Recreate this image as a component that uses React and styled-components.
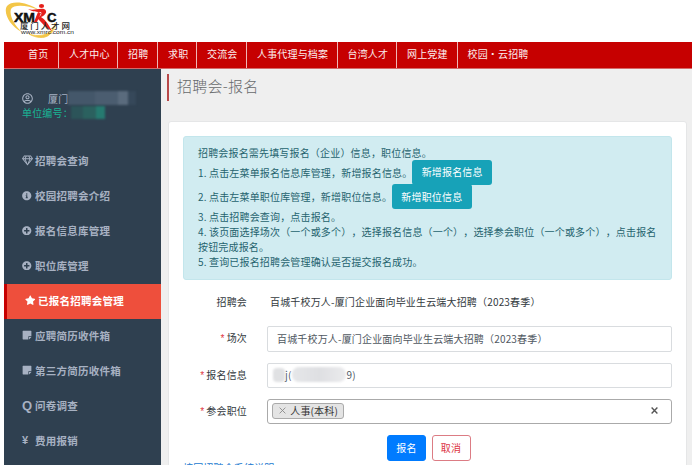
import React from 'react';
import styled, { createGlobalStyle, css } from 'styled-components';
import { FaRegGem, FaRegUserCircle, FaInfoCircle, FaPlusCircle, FaStar, FaStickyNote } from 'react-icons/fa';

const Global = createGlobalStyle`
  * { box-sizing: border-box; }
  html, body { margin: 0; height: 465px; overflow: hidden; background: #fff; }
  body {
    font-family: "Noto Sans CJK SC", sans-serif;
    font-size: 10px;
    letter-spacing: 0.17px;
    color: #333a40;
    text-spacing-trim: space-all;
    font-feature-settings: "chws" 0, "halt" 0;
  }
`;

const Page = styled.div`
  width: 693px;
  height: 465px;
  display: flex;
  flex-direction: column;
  overflow: hidden;
`;
const Header = styled.header`
  height: 42px;
  flex: none;
  padding-left: 4px;
`;
const Nav = styled.nav`
  display: flex;
  flex: none;
  height: 26.5px;
  margin: 0 1px 0 4px;
  padding-left: 14px;
  background: #c60000;
  border-bottom: 1px solid #d46a6a;
`;
const NavItem = styled.a`
  width: ${(p) => p.$w}px;
  padding-left: 10px;
  line-height: 24px;
  color: #fbeeee;
  white-space: nowrap;
  border-right: ${(p) => (p.$last ? 0 : 1)}px solid #efb5b5;
`;
const Body = styled.div`
  display: flex;
  flex: 1;
  min-height: 0;
  padding: 0 1px 0 4px;
`;
const Sidebar = styled.aside`
  width: 157px;
  flex: none;
  background: #2f4050;
  color: #a7b1c2;
`;
const Profile = styled.div`
  height: 76px;
  padding: 22.5px 0 0 18px;
`;
const ProfileRow = styled.div`
  display: flex;
  align-items: center;
  height: 14.5px;
  white-space: nowrap;
  color: ${(p) => (p.$accent ? '#1ab394' : '#a7b1c2')};
  svg { width: 11px; height: 11px; margin-right: 15px; }
`;
const Mosaic = styled.span`
  display: block;
  flex: none;
  width: ${(p) => p.$w}px;
  height: ${(p) => p.$h}px;
  margin-left: ${(p) => p.$ml || 0}px;
  border-radius: ${(p) => p.$r || 0}px;
  background: ${(p) => p.$bg};
  filter: blur(0.8px);
`;
const MenuItem = styled.a`
  display: flex;
  align-items: center;
  height: 34.9px;
  padding: 0 0 2px 18px;
  font-size: 10.5px;
  font-weight: 600;
  letter-spacing: 0.25px;
  white-space: nowrap;
  ${(p) => p.$active && css`
    border-left: 3px solid #c60000;
    background: #ee4f3c;
    color: #fff;
  `}
`;
const MenuIcon = styled.span`
  width: 13px;
  flex: none;
  display: flex;
  font-size: ${(p) => p.$fs || 12}px;
  font-family: "Liberation Sans", sans-serif;
  svg { width: ${(p) => p.$s || 9.5}px; height: ${(p) => p.$s || 9.5}px; }
`;
const Main = styled.main`
  flex: 1;
  min-width: 0;
  background: #efefef;
  padding: 5px 5px 0 6px;
`;
const Title = styled.h1`
  margin: 0 0 20px;
  height: 27.5px;
  padding-left: 8px;
  border-left: 2px solid #b84848;
  font-size: 15px;
  font-weight: 300;
  letter-spacing: 0.25px;
  line-height: 24px;
  color: #676a6c;
`;
const Card = styled.section`
  height: 360px;
  margin-left: 1px;
  padding: 14px 14px 0;
  background: #fff;
  border: 1px solid #e5e6e7;
  border-radius: 3px 3px 0 0;
`;
const Alert = styled.div`
  height: 143.5px;
  padding: 8px 14px 0;
  background: #d1ecf1;
  border: 1px solid #c3e6ec;
  border-radius: 3px;
  color: #25636e;
`;
const Line = styled.div`
  display: flex;
  align-items: center;
  height: ${(p) => p.$h || 14.8}px;
  white-space: nowrap;
`;
const Num = styled.span`
  width: 11px;
  flex: none;
`;
const InfoButton = styled.button`
  flex: none;
  height: 25px;
  width: 79.5px;
  padding: 0 0 1px;
  border: 0;
  border-radius: 3px;
  background: #17a2b8;
  color: #fff;
  font: inherit;
  letter-spacing: inherit;
`;
const FormRow = styled.div`
  display: flex;
  align-items: center;
  height: 25.5px;
  margin-top: ${(p) => p.$mt}px;
`;
const Label = styled.label`
  width: 64px;
  margin-right: 20px;
  padding-bottom: 2px;
  text-align: right;
  white-space: nowrap;
`;
const Star = styled.span`
  margin-right: 1px;
  font-family: "Liberation Mono", monospace;
  color: #e03a44;
`;
const Plain = styled.span`
  padding: 0 0 2px 3px;
  white-space: nowrap;
`;
const Field = styled.div`
  display: flex;
  align-items: center;
  flex: 1;
  height: 25.5px;
  padding: 0 13px 1px ${(p) => p.$pl}px;
  border: 1px solid ${(p) => (p.$dark ? '#aaa' : '#d9dcdf')};
  border-radius: ${(p) => (p.$dark ? 3 : 2)}px;
  color: #50585f;
  white-space: nowrap;
`;
const Tag = styled.span`
  display: flex;
  align-items: center;
  justify-content: space-between;
  width: 72px;
  height: 16px;
  padding: 0 5px 1px 6px;
  border: 1px solid #aaa;
  border-radius: 3px;
  background: #e4e4e4;
  color: #333;
  svg { width: 7px; height: 7px; color: #888; }
`;
const Clear = styled.span`
  margin-left: auto;
  display: flex;
  color: #555;
  svg { width: 7px; height: 7px; }
`;
const Actions = styled.div`
  display: flex;
  gap: 5.5px;
  margin: 11px 0 0 204px;
`;
const ActionButton = styled.button`
  width: 39px;
  height: 26px;
  padding: 0 0 1px;
  font: inherit;
  letter-spacing: inherit;
  border-radius: 3px;
  border: 1px solid ${(p) => (p.$primary ? '#007bff' : '#dc7c84')};
  background: ${(p) => (p.$primary ? '#007bff' : '#fff')};
  color: ${(p) => (p.$primary ? '#fff' : '#dc3545')};
`;
const FootLink = styled.a`
  display: block;
  margin-top: -1px;
  line-height: 15px;
  color: #1a78cf;
`;

const Cross = ({ w = 1 }) => (
  <svg viewBox="0 0 8 8" fill="none" stroke="currentColor" strokeWidth={w}>
    <path d="M.7.7l6.6 6.6M7.3.7L.7 7.3" />
  </svg>
);

const Logo = () => (
  <svg width="74" height="42" viewBox="4 0 74 42">
    <path d="M22 32C9 26 3 12 7 6c5-6 20-4 32 4C27 5 14 4 11 9c-2 6 3 16 11 23z" fill="#f3c648" />
    <path d="M29 34c7 4 15 5 20 1 4-3 6-8 6-12-1 5-4 9-9 11-5 2-11 2-17 0z" fill="#f3c648" stroke="#f3c648" strokeWidth="0.8" />
    <g fontFamily="Liberation Sans, sans-serif" fontWeight="700" fontSize="13" letterSpacing="0" fill="#111" stroke="#111" strokeWidth="0.5">
      <text x="14" y="21.500" textLength="21" lengthAdjust="spacingAndGlyphs">XM</text>
      <text x="47" y="21.500">C</text>
    </g>
    <g fill="#e5201a">
      <ellipse cx="41.500" cy="6" rx="2.600" ry="2" />
      <path d="M28 9c5 2 11-1 16 0 4 2 2 6-3 8 5 3 7 7 11 14-7-4-10-8-15-13 4-2 5-4 4-6-4 0-8 0-13-3z" />
      <path d="M38 12l3 1-4 9h-3z" />
    </g>
    <text x="20" y="29" fontFamily="Noto Sans CJK SC, sans-serif" fontWeight="500" fontSize="8.500" textLength="50" letterSpacing="0" fill="#222">厦门人才网</text>
    <text x="21" y="33.500" fontFamily="Liberation Sans, sans-serif" fontSize="5" textLength="53" lengthAdjust="spacingAndGlyphs" letterSpacing="0" fill="#222">www.xmrc.com.cn</text>
  </svg>
);

const nav = [['首页', 41], ['人才中心', 59], ['招聘', 40], ['求职', 39], ['交流会', 50], ['人事代理与档案', 90.5], ['台湾人才', 59.5], ['网上党建', 60.5], ['校园·云招聘', 90]];
const menu = [
  { text: '招聘会查询', icon: <FaRegGem />, size: 11 },
  { text: '校园招聘会介绍', icon: <FaInfoCircle /> },
  { text: '报名信息库管理', icon: <FaPlusCircle /> },
  { text: '职位库管理', icon: <FaPlusCircle /> },
  { text: '已报名招聘会管理', icon: <FaStar />, size: 10.5, active: true },
  { text: '应聘简历收件箱', icon: <FaStickyNote />, size: 10 },
  { text: '第三方简历收件箱', icon: <FaStickyNote />, size: 10 },
  { text: '问卷调查', icon: 'Q', font: 13 },
  { text: '费用报销', icon: '¥', font: 11 },
];
const fair = '百城千校万人-厦门企业面向毕业生云端大招聘（2023春季）';

export default function App() {
  return (
    <Page>
      <Global />
      <Header><Logo /></Header>
      <Nav>
        {nav.map(([t, w], i) => <NavItem key={t} $w={w} $last={i === nav.length - 1}>{t}</NavItem>)}
      </Nav>
      <Body>
        <Sidebar>
          <Profile>
            <ProfileRow>
              <FaRegUserCircle />厦门
              <Mosaic $w={68} $h={14} $bg="linear-gradient(90deg,#44576a 0 40%,#4b5d70 40% 74%,#5a6b7d 74% 88%,#36485a 88%)" />
            </ProfileRow>
            <ProfileRow $accent>
              单位编号：
              <Mosaic $w={34} $h={13} $ml={-2} $bg="linear-gradient(90deg,#2c5459 0 35%,#2b615f 35% 75%,#267a70 75%)" />
            </ProfileRow>
          </Profile>
          {menu.map((m) => (
            <MenuItem key={m.text} $active={m.active}>
              <MenuIcon $s={m.size} $fs={m.font}>{m.icon}</MenuIcon>{m.text}
            </MenuItem>
          ))}
        </Sidebar>
        <Main>
          <Title>招聘会-报名</Title>
          <Card>
            <Alert>
              <Line>招聘会报名需先填写报名（企业）信息，职位信息。</Line>
              <Line $h={24.5}><Num>1.</Num>点击左菜单报名信息库管理，新增报名信息。<InfoButton>新增报名信息</InfoButton></Line>
              <Line $h={25}><Num>2.</Num>点击左菜单职位库管理，新增职位信息。<InfoButton>新增职位信息</InfoButton></Line>
              <Line><Num>3.</Num>点击招聘会查询，点击报名。</Line>
              <Line><Num>4.</Num>该页面选择场次（一个或多个），选择报名信息（一个），选择参会职位（一个或多个），点击报名</Line>
              <Line>按钮完成报名。</Line>
              <Line><Num>5.</Num>查询已报名招聘会管理确认是否提交报名成功。</Line>
            </Alert>
            <FormRow $mt={10}><Label>招聘会</Label><Plain>{fair}</Plain></FormRow>
            <FormRow $mt={11}><Label><Star>*</Star>场次</Label><Field $pl={9}>{fair}</Field></FormRow>
            <FormRow $mt={11}>
              <Label><Star>*</Star>报名信息</Label>
              <Field $pl={5}>
                <Mosaic $w={12} $h={14} $r={4} $bg="#e0e1e3" />j(
                <Mosaic $w={54} $h={15} $r={7} $ml={1} $bg="linear-gradient(90deg,#e6e7e9,#dedfe2 50%,#ebebed)" />9)
              </Field>
            </FormRow>
            <FormRow $mt={10.5}>
              <Label><Star>*</Star>参会职位</Label>
              <Field $pl={4} $dark><Tag><Cross />人事(本科)</Tag><Clear><Cross w={1.6} /></Clear></Field>
            </FormRow>
            <Actions><ActionButton $primary>报名</ActionButton><ActionButton>取消</ActionButton></Actions>
            <FootLink>校园招聘会系统说明</FootLink>
          </Card>
        </Main>
      </Body>
    </Page>
  );
}
